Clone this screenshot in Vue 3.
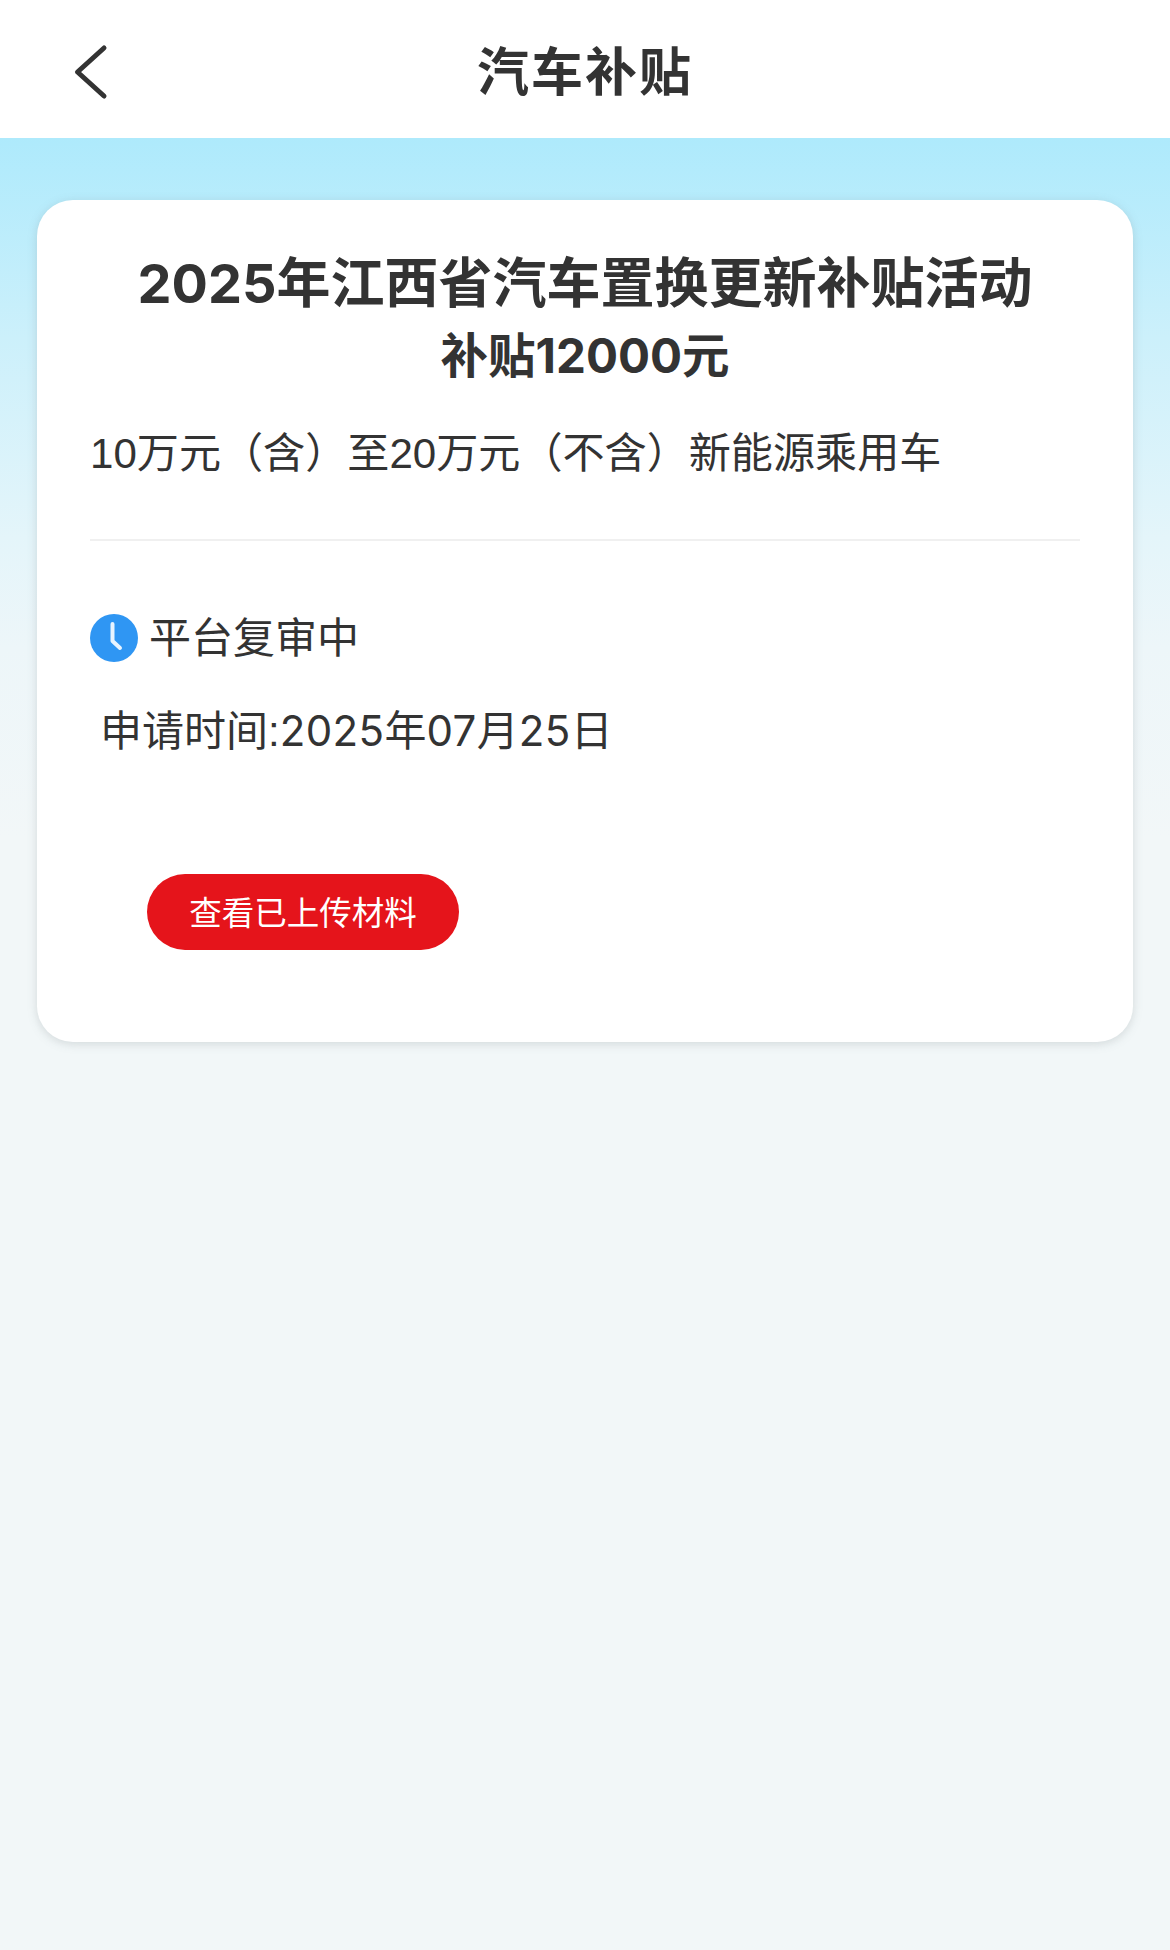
<template>
  <div class="page">
    <header class="nav">
      <button class="back" type="button" aria-label="返回">
        <svg width="36" height="56" viewBox="0 0 36 56">
          <path d="M32 4 L5.5 28 L32 52" fill="none" stroke="#333" stroke-width="5" stroke-linecap="round" stroke-linejoin="round" />
        </svg>
      </button>
      <h1 class="nav-title">汽车补贴</h1>
    </header>
    <main class="body">
      <section class="card">
        <h2 class="title"><span class="num">2025</span>年江西省汽车置换更新补贴活动</h2>
        <p class="amount">补贴<span class="num">12000</span>元</p>
        <p class="desc">10万元（含）至20万元（不含）新能源乘用车</p>
        <div class="divider"></div>
        <div class="status">
          <svg class="clock" width="48" height="48" viewBox="0 0 48 48">
            <circle cx="24" cy="24" r="24" fill="#2f96f3" />
            <path d="M22.5 10 V27 L30 34" fill="none" stroke="#e8f4ff" stroke-width="4" stroke-linecap="round" stroke-linejoin="round" />
          </svg>
          <span>平台复审中</span>
        </div>
        <p class="date">申请时间:<span class="num wide">2025</span>年<span class="num wide">07</span>月<span class="num wide">25</span>日</p>
        <button class="action" type="button">查看已上传材料</button>
      </section>
    </main>
  </div>
</template>

<script setup>
</script>

<style>
html, body { margin: 0; background: #f2f7f8; }
</style>

<style scoped>
.page {
  width: 1170px;
  height: 1950px;
  display: flex;
  flex-direction: column;
  font-family: "Liberation Sans", "Noto Sans CJK SC", sans-serif;
  color: #333;
  overflow: hidden;
}
.num { font-family: Inter, "Liberation Sans", sans-serif; }
.wide { letter-spacing: 0.4px; }
.nav {
  height: 138px;
  flex: none;
  background: #fff;
  position: relative;
  display: flex;
  align-items: center;
  justify-content: center;
}
.back {
  position: absolute;
  left: 72px;
  top: 44px;
  padding: 0;
  border: 0;
  background: none;
  line-height: 0;
}
.nav-title {
  margin: 0;
  font-size: 52px;
  font-weight: 700;
  line-height: 1;
  letter-spacing: 2px;
  position: relative;
  top: 4px;
}
.body {
  flex: 1;
  padding: 62px 37px 0;
  background: linear-gradient(180deg, #aeeafc 0, #ccf0fb 200px, #e4f5fa 400px, #edf6f9 510px, #f2f7f8 700px);
}
.card {
  height: 842px;
  box-sizing: border-box;
  background: #fff;
  border-radius: 36px;
  box-shadow: 0 2px 10px rgba(120, 130, 135, 0.26);
  padding: 47px 53px 0;
}
.title {
  margin: 0;
  text-align: center;
  font-size: 54px;
  line-height: 74px;
  font-weight: 700;
  white-space: nowrap;
}
.amount {
  margin: 0;
  text-align: center;
  font-size: 47.5px;
  line-height: 70px;
  font-weight: 700;
}
.desc {
  margin: 34px 0 0;
  font-size: 42.1px;
  line-height: 56px;
}
.divider {
  height: 2px;
  background: #f0f0f0;
  margin: 57px 0 0;
}
.status {
  display: flex;
  align-items: center;
  gap: 11px;
  margin-top: 74px;
  font-size: 42px;
  line-height: 48px;
}
.clock { flex: none; margin-top: -2px; }
.date {
  margin: 39px 0 0 10px;
  font-size: 42px;
  line-height: 58px;
}
.action {
  display: block;
  width: 312px;
  height: 76px;
  margin: 113px 0 0 57px;
  padding: 4px 0 0;
  border: 0;
  border-radius: 38px;
  background: #e5141b;
  color: #fff;
  font-family: inherit;
  font-size: 32.5px;
  line-height: 72px;
}
</style>
